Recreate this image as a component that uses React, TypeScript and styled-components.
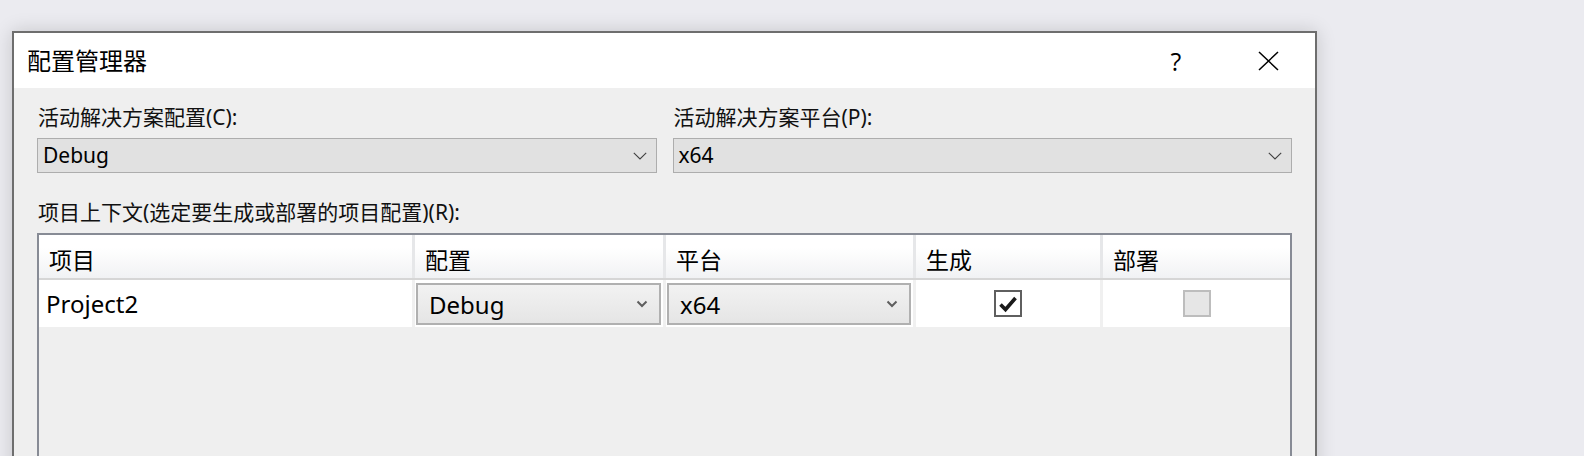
import React from "react";
import styled, { createGlobalStyle } from "styled-components";

const Global = createGlobalStyle`
  html, body {
    margin: 0;
    padding: 0;
    background: #ebebf0;
    overflow: hidden;
  }
  body {
    font-family: "Noto Sans", "Noto Sans CJK SC", sans-serif;
    color: #000;
  }
`;

const Page = styled.div`
  width: 1584px;
  height: 456px;
  padding: 31px 0 0 12px;
  box-sizing: border-box;
  overflow: hidden;
`;

const Dialog = styled.div`
  width: 1305px;
  height: 520px;
  box-sizing: border-box;
  border: 2px solid #6e6e6e;
  background: #efefef;
  box-shadow: 0 0 18px rgba(0, 0, 0, 0.16);
  display: flex;
  flex-direction: column;
`;

const TitleBar = styled.div`
  height: 55px;
  background: #ffffff;
  display: flex;
  align-items: center;
  padding-left: 13px;
`;

const Title = styled.div`
  font-size: 24px;
  line-height: 30px;
  flex: 1;
`;

const HelpButton = styled.div`
  width: 40px;
  text-align: center;
  font-family: "Open Sans", "Noto Sans", sans-serif;
  font-size: 25px;
  line-height: 30px;
  margin-right: 61px;
`;

const CloseButton = styled.div`
  width: 22px;
  height: 22px;
  display: flex;
  align-items: center;
  justify-content: center;
  margin-right: 36px;
`;

const Body = styled.div`
  padding: 16px 23px 0 23px;
  display: flex;
  flex-direction: column;
`;

const TopGrid = styled.div`
  display: grid;
  grid-template-columns: 1fr 1fr;
  column-gap: 16px;
`;

const Field = styled.div`
  display: flex;
  flex-direction: column;
  gap: 7px;
`;

const Label = styled.div`
  font-size: 21px;
  line-height: 27px;
  color: #111;
  padding-left: 1px;
`;

const ComboBox = styled.div`
  height: 35px;
  box-sizing: border-box;
  border: 1px solid #adadad;
  background: #e1e1e1;
  display: flex;
  align-items: center;
  padding: 0 9px 0 5px;
  font-size: 21px;
`;

const ComboText = styled.span`
  flex: 1;
  line-height: 27px;
`;

const SectionLabel = styled(Label)`
  margin-top: 26px;
  margin-bottom: 7px;
`;

const DataGrid = styled.div`
  border: 2px solid #878b95;
  background: #efefef;
  height: 240px;
  box-sizing: border-box;
`;

const Row = styled.div<{ $header?: boolean }>`
  display: grid;
  grid-template-columns: 376px 251px 250px 187px 1fr;
  height: ${(p) => (p.$header ? "45px" : "47px")};
  box-sizing: border-box;
  background: ${(p) =>
    p.$header ? "linear-gradient(#ffffff 0%, #ffffff 30%, #f1f2f4 100%)" : "#ffffff"};
  border-bottom: ${(p) => (p.$header ? "2px solid #d6d6d6" : "none")};
`;

const HeaderCell = styled.div`
  border-right: 3px solid #e6e7e9;
  padding: 10px 0 0 10px;
  font-size: 23px;
  line-height: 30px;
  &:last-child {
    border-right: none;
  }
`;

const Cell = styled.div<{ $center?: boolean; $pad?: string }>`
  border-right: 3px solid #f0f0f0;
  display: flex;
  align-items: center;
  justify-content: ${(p) => (p.$center ? "center" : "flex-start")};
  padding: ${(p) => p.$pad || "0 0 0 7px"};
  font-size: 24px;
  line-height: 30px;
  &:last-child {
    border-right: none;
  }
`;

const CellCombo = styled.div`
  flex: 1;
  height: 42px;
  box-sizing: border-box;
  border: 2px solid #b0b0b0;
  background: linear-gradient(#f2f2f2, #e5e5e5);
  display: flex;
  align-items: center;
  padding: 0 11px 0 11px;
  font-size: 24px;
`;

const CheckBox = styled.div<{ $checked?: boolean }>`
  width: 28px;
  height: 27px;
  box-sizing: border-box;
  border: 2px solid ${(p) => (p.$checked ? "#5f5f5f" : "#bdbdbd")};
  background: ${(p) => (p.$checked ? "#ffffff" : "#e6e6e6")};
  display: flex;
  align-items: center;
  justify-content: center;
`;

const Chevron = ({ small }: { small?: boolean }) =>
  small ? (
    <svg width="12" height="8" viewBox="0 0 12 8">
      <path d="M1.5 1.5 L6 6 L10.5 1.5" fill="none" stroke="#5e5e5e" strokeWidth="2" />
    </svg>
  ) : (
    <svg width="14" height="8" viewBox="0 0 14 8">
      <path d="M0.8 0.8 L7 7 L13.2 0.8" fill="none" stroke="#404040" strokeWidth="1.1" />
    </svg>
  );

const CloseIcon = () => (
  <svg width="21" height="20" viewBox="0 0 21 20">
    <path d="M1 1 L20 19 M20 1 L1 19" stroke="#000" strokeWidth="1.5" fill="none" />
  </svg>
);

const CheckMark = () => (
  <svg width="20" height="18" viewBox="0 0 20 18">
    <path d="M2.5 9.5 L7.5 14.5 L17.5 3" fill="none" stroke="#1a1a1a" strokeWidth="3.6" />
  </svg>
);

export default function App() {
  return (
    <>
      <Global />
      <Page>
        <Dialog>
          <TitleBar>
            <Title>配置管理器</Title>
            <HelpButton>?</HelpButton>
            <CloseButton>
              <CloseIcon />
            </CloseButton>
          </TitleBar>
          <Body>
            <TopGrid>
              <Field>
                <Label>活动解决方案配置(C):</Label>
                <ComboBox>
                  <ComboText>Debug</ComboText>
                  <Chevron />
                </ComboBox>
              </Field>
              <Field>
                <Label>活动解决方案平台(P):</Label>
                <ComboBox>
                  <ComboText>x64</ComboText>
                  <Chevron />
                </ComboBox>
              </Field>
            </TopGrid>
            <SectionLabel>项目上下文(选定要生成或部署的项目配置)(R):</SectionLabel>
            <DataGrid>
              <Row $header>
                <HeaderCell>项目</HeaderCell>
                <HeaderCell>配置</HeaderCell>
                <HeaderCell>平台</HeaderCell>
                <HeaderCell>生成</HeaderCell>
                <HeaderCell>部署</HeaderCell>
              </Row>
              <Row>
                <Cell>Project2</Cell>
                <Cell $pad="3px 2px 2px 1px">
                  <CellCombo>
                    <ComboText>Debug</ComboText>
                    <Chevron small />
                  </CellCombo>
                </Cell>
                <Cell $pad="3px 2px 2px 1px">
                  <CellCombo>
                    <ComboText>x64</ComboText>
                    <Chevron small />
                  </CellCombo>
                </Cell>
                <Cell $center $pad="0">
                  <CheckBox $checked>
                    <CheckMark />
                  </CheckBox>
                </Cell>
                <Cell $center $pad="0">
                  <CheckBox />
                </Cell>
              </Row>
            </DataGrid>
          </Body>
        </Dialog>
      </Page>
    </>
  );
}
